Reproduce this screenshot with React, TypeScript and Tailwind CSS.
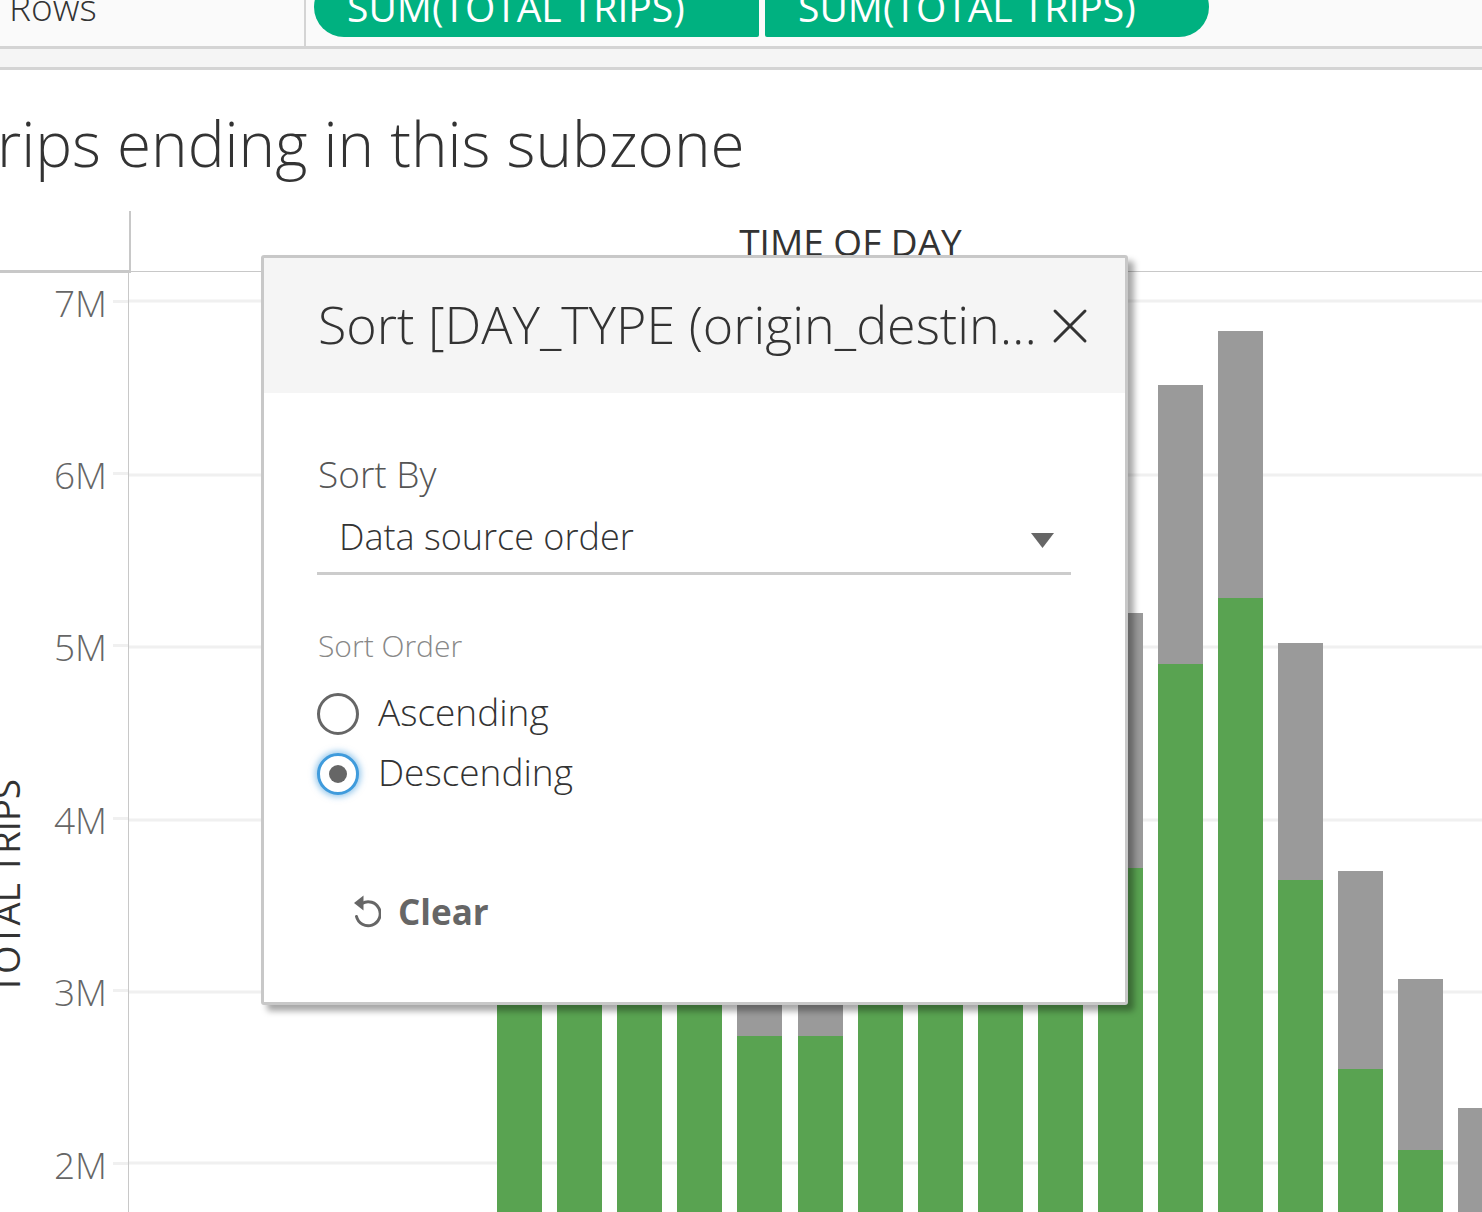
import { X } from "lucide-react";

const bars = [
  { x: 497, grey: 1000, green: 1000 },
  { x: 557, grey: 1000, green: 1000 },
  { x: 617, grey: 1000, green: 1000 },
  { x: 677, grey: 1000, green: 1000 },
  { x: 737, grey: 900, green: 1036 },
  { x: 798, grey: 900, green: 1036 },
  { x: 858, grey: 1000, green: 1000 },
  { x: 918, grey: 1000, green: 1000 },
  { x: 978, grey: 1000, green: 1000 },
  { x: 1038, grey: 1000, green: 1000 },
  { x: 1098, grey: 613, green: 868 },
  { x: 1158, grey: 385, green: 664 },
  { x: 1218, grey: 331, green: 598 },
  { x: 1278, grey: 643, green: 880 },
  { x: 1338, grey: 871, green: 1069 },
  { x: 1398, grey: 979, green: 1150 },
  { x: 1458, grey: 1108, green: 1300 },
];

const gridLines = [301, 475, 647, 820, 992, 1163];
const ticks = ["7M", "6M", "5M", "4M", "3M", "2M"];

// page coordinates minus where the plot starts
const PLOT_X = 129;
const PLOT_Y = 272;

function Pill({ className }: { className: string }) {
  return (
    <div
      className={`flex h-[60px] items-end bg-[#00b180] pb-[11px] pl-[33px] text-[39px] leading-none text-white ${className}`}
    >
      SUM(TOTAL TRIPS)
    </div>
  );
}

function Radio({ label, checked }: { label: string; checked?: boolean }) {
  return (
    <div className="flex h-[60px] items-center gap-[19px]">
      <div
        className={`flex size-[42px] items-center justify-center rounded-full border-[3px] bg-white ${
          checked
            ? "border-[#3f9bdc] shadow-[0_0_6px_2px_rgba(63,155,220,0.55)]"
            : "border-[#666666]"
        }`}
      >
        {checked && <div className="size-[18px] rounded-full bg-[#666666]" />}
      </div>
      <span className="-mt-[6px] text-[37px] font-light leading-none text-[#333333]">{label}</span>
    </div>
  );
}

function SortDialog() {
  return (
    <div className="absolute left-[261px] top-[255px] h-[750px] w-[867px] rounded-[3px] border-[3px] border-[#c8c8c8] bg-white shadow-[6px_6px_6px_rgba(0,0,0,0.35)]">
      <div className="flex h-[135px] items-center bg-[#f5f5f5] pl-[54px] pr-[25px]">
        <span className="min-w-0 flex-1 whitespace-nowrap pb-[4px] text-[52px] font-light leading-none text-[#333333]">
          Sort [DAY_TYPE (origin_destin...
        </span>
        <X className="size-[60px] shrink-0 text-[#333333]" strokeWidth={1.2} />
      </div>
      <div className="pl-[53px] pr-[54px] pt-[59px]">
        <div className="pl-px text-[37px] font-light leading-[44px] text-[#555555]">Sort By</div>
        <div className="mt-[6px] flex h-[73px] items-center justify-between border-b-[3px] border-[#cccccc] pl-[22px] pr-[17px]">
          <span className="text-[36px] font-light leading-none text-[#333333]">Data source order</span>
          <svg width="23" height="15" viewBox="0 0 23 15" className="mt-[6px]">
            <path d="M0 0h23L11.5 15z" fill="#666666" />
          </svg>
        </div>
        <div className="mt-[51px] pl-px text-[30px] font-light leading-[40px] text-[#888888]">Sort Order</div>
        <div className="mt-[18px]">
          <Radio label="Ascending" />
          <Radio label="Descending" checked />
        </div>
        <div className="ml-[36px] mt-[90px] flex items-center gap-[17px]">
          <svg width="28" height="34" viewBox="0 0 28 34" fill="none">
            <path d="M9 8.5a12 12 0 1 1-5.5 13" stroke="#666666" strokeWidth="3" strokeLinecap="round" />
            <path d="M10.5 0.5v15L1 8z" fill="#666666" />
          </svg>
          <span className="text-[35px] font-bold leading-none text-[#666666]">Clear</span>
        </div>
      </div>
    </div>
  );
}

export default function App() {
  return (
    <div className="relative h-[1212px] w-[1482px] overflow-hidden bg-white font-['Open_Sans',sans-serif]">
      {/* shelf */}
      <div className="flex h-[49px] border-b-[3px] border-[#d4d4d4] bg-[#fafafa]">
        <div className="flex w-[306px] items-end border-r-2 border-[#d4d4d4] pb-[21px] pl-[9px] text-[37px] font-light leading-none text-[#333333]">
          Rows
        </div>
        <div className="ml-[8px] flex h-[37px] items-end gap-[6px]">
          <Pill className="w-[445px] rounded-l-[30px] rounded-r-[2px]" />
          <Pill className="w-[444px] rounded-l-[2px] rounded-r-[30px]" />
        </div>
      </div>
      <div className="h-[21px] border-b-[3px] border-[#d4d4d4] bg-[#f5f5f5]" />

      {/* title */}
      <div className="flex h-[141px] items-center overflow-hidden whitespace-nowrap pt-[4px] text-[62px] font-light leading-none text-[#333333]">
        <span className="-ml-[3px]">rips ending in this subzone</span>
      </div>

      {/* column header */}
      <div className="flex h-[61px]">
        <div className="h-[62px] w-[131px] self-start border-b-[3px] border-r-[2px] border-[#c8c8c8]" />
        <div className="flex flex-1 justify-center border-b border-[#c8c8c8] pl-[88px] pt-[12px] text-[37px] font-normal leading-none text-[#333333]">
          TIME OF DAY
        </div>
      </div>

      {/* plot */}
      <div className="flex h-[940px]">
        <div className="flex w-[129px] border-r border-[#c8c8c8]">
          <div className="w-[23px] overflow-hidden pt-[510px]">
            <div className="-ml-[12px] h-[212px] whitespace-nowrap text-[36.5px] leading-none text-[#333333] [transform:rotate(180deg)] [writing-mode:vertical-rl]">
              TOTAL TRIPS
            </div>
          </div>
          <div className="-mt-[57px] flex-1">
            {ticks.map((t) => (
              <div key={t} className="flex h-[172.4px] items-center justify-end">
                <span className="mr-[6px] mt-[2px] text-[37px] font-light leading-none text-[#666666]">{t}</span>
                <div className="h-[3px] w-[15px] bg-[#f0f0f0]" />
              </div>
            ))}
          </div>
        </div>
        <svg width="1353" height="940" viewBox="0 0 1353 940" className="block">
          {gridLines.map((y) => (
            <rect key={y} x="0" y={y - PLOT_Y - 1.5} width="1353" height="3" fill="#f0f0f0" />
          ))}
          {bars.map((b) => (
            <g key={b.x}>
              <rect x={b.x - PLOT_X} y={b.grey - PLOT_Y} width="45" height={1212 - b.grey} fill="#9a9a9a" />
              <rect x={b.x - PLOT_X} y={b.green - PLOT_Y} width="45" height={Math.max(1212 - b.green, 0)} fill="#59a351" />
            </g>
          ))}
        </svg>
      </div>

      <SortDialog />
    </div>
  );
}
